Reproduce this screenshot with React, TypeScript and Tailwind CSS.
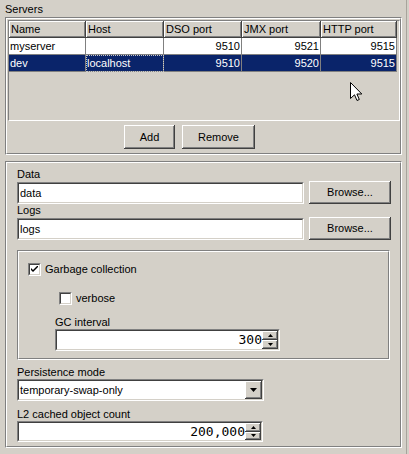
import React from "react";

const sunken =
  "border border-t-[#808080] border-l-[#808080] border-b-white border-r-white";
const sunkenInner =
  "border border-t-[#404040] border-l-[#404040] border-b-[#d4d0c8] border-r-[#d4d0c8]";
const raised =
  "shadow-[inset_-1px_-1px_0_#404040,inset_1px_1px_0_#fff,inset_-2px_-2px_0_#808080]";

function Etched({ className, children }: { className: string; children?: React.ReactNode }) {
  return (
    <div className={`border border-t-[#808080] border-l-[#808080] border-b-white border-r-white ${className}`}>
      <div className="h-full w-full border border-t-white border-l-white border-b-[#808080] border-r-[#808080] flex flex-col">
        {children}
      </div>
    </div>
  );
}

function Button({ label, className }: { label: string; className: string }) {
  return (
    <div className={`${raised} bg-[#d4d0c8] flex items-center justify-center ${className}`}>
      {label}
    </div>
  );
}

function TextField({ value, className }: { value: string; className: string }) {
  return (
    <div className={`${sunken} ${className}`}>
      <div className={`${sunkenInner} h-full bg-white flex items-center pl-[1px]`}>{value}</div>
    </div>
  );
}

function SpinArrow({ up }: { up?: boolean }) {
  return (
    <div className={`${raised} bg-[#d4d0c8] flex-1 flex items-center justify-center`}>
      <svg width="5" height="3" viewBox="0 0 5 3">
        {up ? <path d="M2.5 0 L5 3 L0 3 Z" fill="#000" /> : <path d="M0 0 L5 0 L2.5 3 Z" fill="#000" />}
      </svg>
    </div>
  );
}

function Spinner({ value, className }: { value: string; className: string }) {
  return (
    <div className={`${sunken} ${className}`}>
      <div className={`${sunkenInner} h-full bg-white flex`}>
        <div className="flex-1 flex items-center justify-end font-['DejaVu_Sans_Mono',monospace] text-[13px]">
          {value}
        </div>
        <div className="w-[16px] flex flex-col">
          <SpinArrow up />
          <SpinArrow />
        </div>
      </div>
    </div>
  );
}

function CheckBox({ checked, label, className }: { checked?: boolean; label: string; className: string }) {
  return (
    <div className={`flex items-center h-[13px] ${className}`}>
      <div className={`${sunken} w-[13px] h-[13px]`}>
        <div className={`${sunkenInner} h-full bg-white flex items-center justify-center`}>
          {checked && (
            <svg width="7" height="7" viewBox="0 0 7 7">
              <path d="M0 2 L0 4 L2 6 L7 1 L7 -1 L2 4 Z" fill="#000" />
            </svg>
          )}
        </div>
      </div>
      <span className="ml-[4px] leading-[13px]">{label}</span>
    </div>
  );
}

const columns = [
  { name: "Name", w: "w-[77px]" },
  { name: "Host", w: "w-[78px]" },
  { name: "DSO port", w: "w-[78px]" },
  { name: "JMX port", w: "w-[79px]" },
  { name: "HTTP port", w: "w-[76px]" },
];

const rows = [
  { cells: ["myserver", "", "9510", "9521", "9515"], selected: false },
  { cells: ["dev", "localhost", "9510", "9520", "9515"], selected: true },
];

export default function App() {
  return (
    <div className="w-[409px] h-[454px] bg-[#d4d0c8] flex font-['Liberation_Sans',Arial,sans-serif] text-[11px] text-black relative overflow-hidden">
      <div className="w-[406px] flex flex-col">
        {/* Servers */}
        <div className="h-[17px] pl-[5px] pt-[3px] leading-[13px]">Servers</div>
        <Etched className="ml-[5px] w-[397px] h-[138px]">
          <div className={`ml-[1px] mt-[1px] w-[392px] h-[101px] ${sunken} flex flex-col`}>
            <div className="flex h-[17px]">
              {columns.map((c) => (
                <div key={c.name} className={`${c.w} ${raised} bg-[#d4d0c8] pl-[2px] flex items-center`}>
                  {c.name}
                </div>
              ))}
            </div>
            {rows.map((r, ri) => (
              <div key={ri} className="flex h-[17px]">
                {r.cells.map((cell, ci) => (
                  <div
                    key={ci}
                    className={`${columns[ci].w} border-r border-b border-[#808080] flex items-center px-[1px] ${
                      ci >= 2 ? "justify-end" : ""
                    } ${r.selected ? "bg-[#0a246a] text-white" : "bg-white"} ${
                      r.selected && ci === 1 ? "outline outline-1 outline-dotted outline-[#c8c8c8] -outline-offset-1" : ""
                    }`}
                  >
                    {cell}
                  </div>
                ))}
              </div>
            ))}
          </div>
          <div className="flex mt-[4px] ml-[117px]">
            <Button label="Add" className="w-[51px] h-[24px]" />
            <Button label="Remove" className="ml-[7px] w-[73px] h-[24px]" />
          </div>
        </Etched>

        {/* Settings */}
        <Etched className="mt-[6px] ml-[5px] w-[397px] h-[287px]">
          <div className="pl-[10px] flex flex-col">
            <div className="mt-[5px] h-[13px] leading-[13px]">Data</div>
            <div className="flex items-end h-[23px]">
              <TextField value="data" className="w-[287px] h-[22px]" />
              <Button label="Browse..." className="ml-[5px] w-[82px] h-[23px]" />
            </div>
            <div className="h-[13px] leading-[13px]">Logs</div>
            <div className="flex items-end h-[23px]">
              <TextField value="logs" className="w-[287px] h-[22px]" />
              <Button label="Browse..." className="ml-[5px] w-[82px] h-[23px]" />
            </div>

            <Etched className="mt-[10px] w-[373px] h-[110px]">
              <CheckBox checked label="Garbage collection" className="mt-[11px] ml-[9px]" />
              <CheckBox label="verbose" className="mt-[16px] ml-[40px]" />
              <div className="mt-[11px] ml-[36px] h-[13px] leading-[13px]">GC interval</div>
              <Spinner value="300" className="ml-[36px] w-[225px] h-[22px]" />
            </Etched>

            <div className="mt-[6px] h-[13px] leading-[13px]">Persistence mode</div>
            <div className={`${sunken} w-[247px] h-[22px]`}>
              <div className={`${sunkenInner} h-full bg-white flex`}>
                <div className="flex-1 flex items-center pl-[1px]">temporary-swap-only</div>
                <div className={`${raised} bg-[#d4d0c8] w-[17px] flex items-center justify-center`}>
                  <svg width="7" height="4" viewBox="0 0 7 4">
                    <path d="M0 0 L7 0 L3.5 4 Z" fill="#000" />
                  </svg>
                </div>
              </div>
            </div>

            <div className="mt-[7px] h-[13px] leading-[13px]">L2 cached object count</div>
            <Spinner value="200,000" className="w-[246px] h-[21px]" />
          </div>
        </Etched>
      </div>
      <div className="w-px bg-[#a8a49c]" />

      {/* mouse pointer */}
      <svg className="absolute left-[350px] top-[82px]" width="13" height="20" viewBox="0 0 13 20">
        <path d="M0.5 0.5 L0.5 16.5 L4.5 12.8 L7 18.5 L9.3 17.5 L6.9 12 L11.8 12 Z" fill="#fff" stroke="#000" strokeWidth="1" />
      </svg>
    </div>
  );
}
